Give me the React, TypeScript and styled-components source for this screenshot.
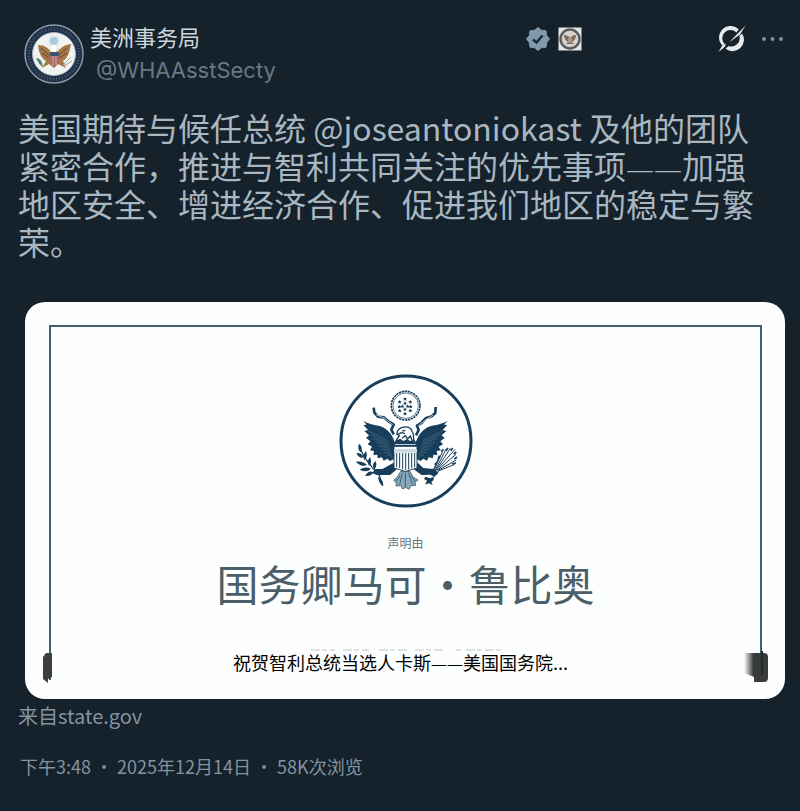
import React from "react";
import styled, { createGlobalStyle } from "styled-components";

const navy = "#173f5b";

const GlobalStyle = createGlobalStyle`
  *, *::before, *::after { box-sizing: border-box; }
  body {
    margin: 0;
    background: #15212b;
    font-family: "Noto Sans CJK SC", sans-serif;
  }
`;

const Post = styled.article`
  min-height: 100vh;
  padding: 24px 15px 24px 18px;
  background: #15212b;
  color: #a9b7c1;
`;

const Header = styled.header`
  display: flex;
  align-items: flex-start;
`;

const AvatarLink = styled.a`
  display: block;
  flex: none;
  height: 60px;
  margin: 0 6px;
`;

const Identity = styled.div`
  display: flex;
  flex: 1;
  flex-direction: column;
  min-width: 0;
`;

const Name = styled.a`
  color: #cdd7df;
  font-size: 22px;
  line-height: 24px;
  text-decoration: none;
`;

const Handle = styled.a`
  padding-left: 6px;
  color: #6b7885;
  font-family: Inter, "Liberation Sans", sans-serif;
  font-size: 22px;
  line-height: 44px;
  text-decoration: none;
`;

const Badges = styled.div`
  display: flex;
  align-items: center;
  gap: 8px;
  height: 30px;
`;

const Actions = styled.div`
  display: flex;
  align-items: center;
  gap: 15px;
  height: 30px;
  margin-left: 136px;
`;

const IconButton = styled.button`
  display: flex;
  padding: 0;
  border: 0;
  background: none;
  color: inherit;
  cursor: pointer;
`;

const Message = styled.p`
  margin: 16px 0 0;
  padding-right: 16px;
  font-size: 32px;
  line-height: 38px;
`;

const Mention = styled.a`
  color: inherit;
  text-decoration: none;
`;

const Dash = styled.span<{ $size: number }>`
  font-family: "Noto Sans", sans-serif;
  font-size: ${({ $size }) => $size}px;
  font-weight: 300;
  line-height: 1;
`;

const Card = styled.a`
  position: relative;
  display: block;
  margin: 42px 0 0 7px;
  padding: 23px 23px 19px 24px;
  border-radius: 20px;
  background: #fdfefe;
  color: #000;
  text-align: center;
  text-decoration: none;
`;

const Frame = styled.div`
  display: flex;
  flex-direction: column;
  align-items: center;
  min-height: 355px;
  padding-top: 47px;
  border: 2px solid #41606f;
  border-bottom: 0;
`;

const Overline = styled.span`
  margin-top: 26px;
  color: #66727a;
  font-size: 12px;
  line-height: 18px;
`;

const Speaker = styled.strong`
  color: #4c5f69;
  font-size: 42px;
  font-weight: 400;
  line-height: 62px;
`;

const Trace = styled.svg`
  display: block;
  margin-top: 35px;
`;

const Caption = styled.span`
  margin-right: 10px;
  font-size: 18px;
  line-height: 22px;
`;

const Smudge = styled.svg<{ $side: "left" | "right" }>`
  position: absolute;
  bottom: 16px;
  ${({ $side }) => $side}: 17px;
`;

const Source = styled.p`
  margin: 2px 0 0;
  color: #8493a0;
  font-size: 20px;
  line-height: 30px;
`;

const SourceLink = styled.a`
  color: inherit;
  text-decoration: none;
`;

const Meta = styled.footer`
  margin: 22px 0 0 2px;
  color: #8493a0;
  font-size: 18px;
  line-height: 26px;
`;

const feathers = [0, 1, 2, 3, 4, 5, 6, 7];

function Wing() {
  return (
    <g>
      <path
        fill={navy}
        d="M98 166 C118 180 147 177 165 190 C181 201 190 217 196 239 L190 282 L179 287 L171 280 L160 286 L155 276 L142 279 L141 268 L129 269 L131 257 L119 255 L125 244 L112 237 L120 228 L107 218 L116 210 L102 197 L113 194 L99 179 L109 178Z"
      />
      <g stroke="#eaf4f8" strokeWidth="1.5" fill="none" opacity=".35">
        {feathers.map((i) => (
          <path key={i} d={`M${112 + i * 8} ${196 + i * 11} Q${145 + i * 4} ${210 + i * 8} ${172 + i * 2} ${226 + i * 7}`} />
        ))}
      </g>
    </g>
  );
}

function GreatSeal() {
  const stars = [
    [224, 101], [208, 110], [224, 114], [240, 110], [207, 124], [216, 123], [232, 123],
    [241, 124], [208, 136], [224, 132], [240, 136], [224, 145],
  ];
  return (
    <svg width="134" height="134" viewBox="26 26 402 402" role="img" aria-label="美国国徽">
      <circle cx="227" cy="227" r="195" fill="#fff" stroke={navy} strokeWidth="9" />
      <circle cx="226" cy="121" r="43" fill="none" stroke={navy} strokeWidth="5" strokeDasharray="7 2" />
      <circle cx="226" cy="121" r="38" fill="none" stroke={navy} strokeWidth="2" />
      {stars.map(([x, y], i) => (
        <path
          key={i}
          fill={navy}
          d={`M${x} ${y - 6}l2 4 4 0-3 3 1 4-4-2-4 2 1-4-3-3 4 0z`}
        />
      ))}
      <g fill="none" stroke={navy} strokeLinejoin="round">
        <path strokeWidth="8" d="M130 127 L132 142 L143 154 L160 156 L176 169 L190 178 L183 193 L190 207" />
        <path strokeWidth="8" d="M316 125 L315 143 L304 153 L286 159 L273 173 L260 181 L265 194 L257 210" />
      </g>
      <g fill="none" stroke="#fff" strokeWidth="2">
        <path d="M137 148 L145 151 L161 158 L187 178" />
        <path d="M309 149 L289 161 L264 181" />
      </g>
      <Wing />
      <g transform="matrix(-1 0 0 1 450 0)">
        <Wing />
      </g>
      <path
        d="M191 240 L199 223 L207 211 L200 207 L201 198 C208 184 231 180 242 191 L249 207 L250 223 L260 240Z"
        fill="#fff"
        stroke={navy}
        strokeWidth="4"
      />
      <path d="M202 207 L213 202 L224 204 M216 197 L225 195 M215 219 L225 211 L232 221 L240 212 L247 229" fill="none" stroke={navy} strokeWidth="4" />
      <path fill={navy} d="M199 225 L210 220 L219 227 L230 221 L240 227 L249 224 L256 236 L194 236Z" />
      <g fill={navy}>
        <path d="M190 292 L156 311 L135 311 L125 323 L139 329 L179 329 L198 313Z" />
        <path d="M262 292 L279 308 L310 311 L325 322 L312 335 L300 328 L274 329 L252 313Z" />
      </g>
      <g fill="#8ba7ba" stroke={navy} strokeWidth="2">
        <path d="M211 318 L201 335 L190 345 L198 351 L197 362 L211 361 L217 371 L226 366 L236 372 L242 361 L256 360 L254 350 L263 344 L248 335 L239 318Z" />
        <path d="M225 322V365M216 322L208 358M234 322L246 356M209 332L196 351M241 332L256 350" />
      </g>
      <path d="M191 243H260V309Q242 311 225 319Q208 311 191 309Z" fill="#fff" stroke={navy} strokeWidth="3" />
      <path d="M191 251H260V262H191Z" fill="#c9d8e1" />
      <path d="M199 263V306M208 263V308M217 263V312M226 263V315M235 263V312M244 263V308M253 263V306" stroke={navy} strokeWidth="3" />
      <path d="M86 240 C96 272 122 304 147 330 L156 360" fill="none" stroke={navy} strokeWidth="4" />
      <g fill={navy}>
        <path d="M86 235Q99 245 91 261Q80 252 86 235Z" />
        <path d="M78 263Q94 262 101 276Q86 281 78 263Z" />
        <path d="M107 257Q113 273 103 285Q94 271 107 257Z" />
        <path d="M76 289Q98 286 110 299Q94 307 76 289Z" />
        <path d="M119 275Q126 291 117 302Q107 291 119 275Z" />
        <path d="M88 313Q105 301 122 310Q110 324 88 313Z" />
        <path d="M135 287Q143 300 132 313Q122 299 135 287Z" />
        <path d="M105 332Q112 314 129 320Q124 334 105 332Z" />
        <path d="M143 334Q159 342 159 363Q145 355 143 334Z" />
        <path d="M285 334L299 339L310 334V344L303 350L307 359L295 354L284 358L290 346L281 341Z" />
      </g>
      <g stroke={navy} strokeWidth="3" fill="none">
        <path d="M309 319L337 258M313 318L348 250M316 316L360 249M318 315L374 252M321 315L377 267M322 316L378 284M322 318L373 297M308 316L327 273" />
        <path strokeWidth="5" d="M332 258l8-6M347 256l6-8M361 256l6-8M370 266l8-6M372 281l8-6M365 296l12-3M328 271l-5 10M318 292l-4 7" />
      </g>
    </svg>
  );
}

function Avatar() {
  return (
    <svg width="60" height="60" viewBox="0 0 60 60" role="img" aria-label="美洲事务局">
      <circle cx="30" cy="30" r="29" fill="#1f3049" stroke="#8b9aa5" strokeWidth="1.5" />
      <circle cx="30" cy="30" r="25" fill="none" stroke="#8392a1" strokeWidth="3" strokeDasharray="1 2" opacity=".4" />
      <circle cx="30" cy="30" r="21.5" fill="#f1f3f2" stroke="#a8b3b9" />
      <circle cx="30" cy="17" r="5" fill="#a9cbdc" stroke="#e1edf3" strokeWidth="2" />
      <path fill="#a47744" d="M14 21 Q24 21 28 30 L26 22 Q31 18 34 23 L32 30 Q37 21 47 20 Q45 34 39 37 L42 44 L34 40 L30 44 L25 40 L18 44 L22 37 Q15 33 14 21Z" />
      <path d="M17 24L25 31M18 29L25 34M43 24L35 31M43 29L35 34" stroke="#64472f" />
      <path d="M26 22Q31 18 34 23L32 28H27Z" fill="#fff" />
      <path d="M26 29H35V38Q34 41 30 43Q26 41 26 38Z" fill="#a8676b" />
      <path d="M26 28H35V32H26Z" fill="#3e526a" />
      <path d="M29 32V42M32 32V41" stroke="#d9aaa6" />
      <path d="M12 34Q18 34 19 43Q15 41 12 34Z" fill="#50876a" />
      <path d="M39 41L47 33M40 42L48 37" stroke="#a1a695" />
    </svg>
  );
}

function Verified() {
  return (
    <svg width="24" height="24" viewBox="0 0 24 24" role="img" aria-label="已认证">
      <path
        fill="#8298ad"
        d="M12 0.5L15.3 3.2L20 3.8L20.7 8.5L23.5 12L20.7 15.5L20 20.2L15.3 20.8L12 23.5L8.7 20.8L4 20.2L3.3 15.5L.5 12L3.3 8.5L4 3.8L8.7 3.2Z"
        stroke="#8298ad"
        strokeLinejoin="round"
      />
      <path d="M7 12.5L10.5 15.5L16.5 8.5" fill="none" stroke="#182a3b" strokeWidth="2.5" />
    </svg>
  );
}

function Affiliate() {
  return (
    <svg width="24" height="24" viewBox="0 0 24 24" role="img" aria-label="美国国务院">
      <path d="M0.5 0.5H23.5V23.5H0.5Z" fill="#e4e6e5" />
      <circle cx="12" cy="12" r="9.5" fill="#d9d3ca" stroke="#5b5c5f" strokeWidth="2.5" />
      <path d="M6 8Q10 8 12 11Q14 8 18 8Q18 13 14 15L16 17H8L10 15Q6 13 6 8Z" fill="#7c6d5f" />
      <path d="M10 11H14V15L12 16L10 15Z" fill="#aa9b8d" />
    </svg>
  );
}

function Grok() {
  return (
    <svg width="28" height="28" viewBox="0 0 28 28" fill="#e6eaec" aria-hidden="true">
      <path d="M20.8 4.6A11.4 11.4 0 0 0 4.2 20.4L6.6 19.2A8.3 8.3 0 0 1 18.4 7.5Z" />
      <path d="M24 8.4A11.4 11.4 0 0 1 7.6 23.8L10.4 20.9A8.3 8.3 0 0 0 21.4 11Z" />
      <path d="M27.5 .5L11 17.4L22 9.4Q24.5 5.5 27.5 .5Z" />
      <path d="M.5 27L4.2 20.4L7.8 18.6L7.2 21.4Z" />
    </svg>
  );
}

export default function App() {
  return (
    <>
      <GlobalStyle />
      <Post lang="zh-CN">
        <Header>
          <AvatarLink href="#profile"><Avatar /></AvatarLink>
          <Identity>
            <Name href="#profile">美洲事务局</Name>
            <Handle href="#profile">@WHAAsstSecty</Handle>
          </Identity>
          <Badges><Verified /><Affiliate /></Badges>
          <Actions>
            <IconButton type="button" aria-label="Grok"><Grok /></IconButton>
            <IconButton type="button" aria-label="更多">
              <svg width="24" height="24" viewBox="0 0 24 24" fill="#84919c" aria-hidden="true">
                <circle cx="3" cy="12" r="2" />
                <circle cx="11.5" cy="12" r="2" />
                <circle cx="20" cy="12" r="2" />
              </svg>
            </IconButton>
          </Actions>
        </Header>
        <Message>
          美国期待与候任总统 <Mention href="#mention">@joseantoniokast</Mention> 及他的团队紧密合作，推进与智利共同关注的优先事项<Dash $size={28}>——</Dash>加强地区安全、增进经济合作、促进我们地区的稳定与繁荣。
        </Message>
        <Card href="#statement">
          <Frame>
            <GreatSeal />
            <Overline>声明由</Overline>
            <Speaker>国务卿马可・鲁比奥</Speaker>
            <Trace width="190" height="2" viewBox="0 0 190 2" aria-hidden="true">
              <path
                d="M0 1H24M32 1H58M68 1H98M104 1H134M145 1H150M155 1H190"
                stroke="#a9adaf"
                strokeDasharray="9 2 5 3"
                opacity=".7"
              />
            </Trace>
            <Caption>祝贺智利总统当选人卡斯<Dash $size={16}>——</Dash>美国国务院...</Caption>
          </Frame>
          <Smudge $side="left" width="10" height="32" viewBox="0 0 10 32" aria-hidden="true">
            <path d="M4 2H10V26L6 28V32L1 28V6Z" fill="#3c3f40" />
          </Smudge>
          <Smudge $side="right" width="24" height="32" viewBox="0 0 24 32" aria-hidden="true">
            <defs>
              <linearGradient id="fade">
                <stop stopColor="#3a3a3b" stopOpacity="0" />
                <stop offset=".4" stopColor="#3a3a3b" />
              </linearGradient>
            </defs>
            <path d="M0 2H20Q24 2 24 6V27Q24 31 20 31H10V26L0 22Z" fill="url(#fade)" />
            <path d="M18 0V24" stroke="#162d3a" strokeWidth="2" />
          </Smudge>
        </Card>
        <Source>来自<SourceLink href="#source">state.gov</SourceLink></Source>
        <Meta>
          <time dateTime="2025-12-14T15:48">下午3:48 ・ 2025年12月14日</time> ・ <span>58K次浏览</span>
        </Meta>
      </Post>
    </>
  );
}
